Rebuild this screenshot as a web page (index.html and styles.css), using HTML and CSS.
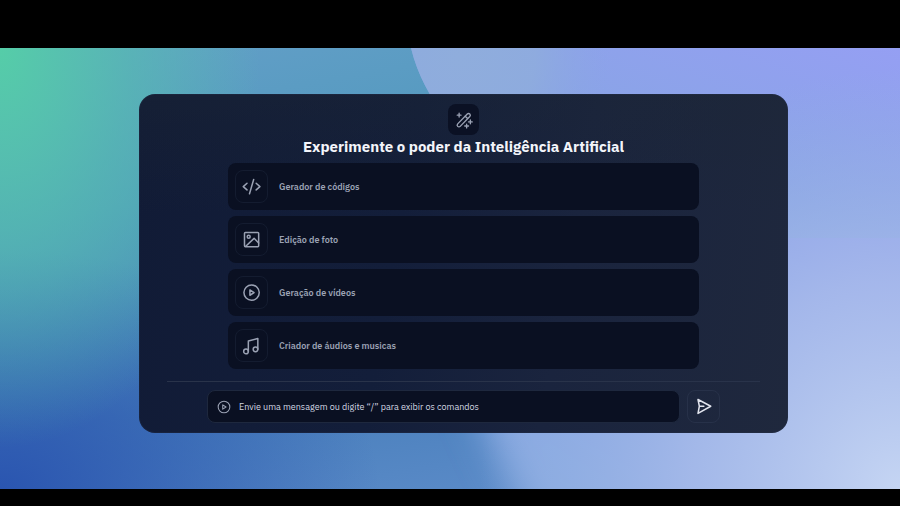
FILE: index.html
```html
<!DOCTYPE html>
<html lang="pt-BR">
<head>
<meta charset="utf-8">
<meta name="viewport" content="width=device-width, initial-scale=1">
<title>Inteligência Artificial</title>
<link rel="stylesheet" href="styles.css">
</head>
<body>
<main class="stage">
  <svg class="backdrop" viewBox="0 0 900 441" preserveAspectRatio="none" aria-hidden="true">
    <defs>
      <linearGradient id="wave" x1="0" y1="1" x2="1" y2="0">
        <stop offset="0" stop-color="#8aaede"/>
        <stop offset="0.5" stop-color="#89a4e6"/>
        <stop offset="1" stop-color="#959ff3"/>
      </linearGradient>
      <radialGradient id="corner" gradientUnits="userSpaceOnUse" cx="900" cy="441" r="420">
        <stop offset="0" stop-color="#c5d5f3"/>
        <stop offset="0.5" stop-color="#a9bcea" stop-opacity="0.8"/>
        <stop offset="1" stop-color="#93b0e0" stop-opacity="0"/>
      </radialGradient>
      <radialGradient id="glow" gradientUnits="userSpaceOnUse" cx="460" cy="10" r="150">
        <stop offset="0" stop-color="#8faddc"/>
        <stop offset="0.5" stop-color="#8faddc" stop-opacity="0.8"/>
        <stop offset="1" stop-color="#8aa5e4" stop-opacity="0"/>
      </radialGradient>
      <filter id="soft" x="-20%" y="-20%" width="140%" height="140%"><feGaussianBlur stdDeviation="18"/></filter>
      <clipPath id="upper"><rect width="900" height="190"/></clipPath>
    </defs>
    <path d="M430 190 C445 290 470 360 535 480 L960 480 V150 H430Z" fill="url(#wave)" filter="url(#soft)"/>
    <g clip-path="url(#upper)">
      <path d="M411 0 C418 28 430 48 445 70 C480 125 520 145 560 190 H900 V0Z" fill="url(#wave)"/>
      <path d="M411 0 C418 28 430 48 445 70 C480 125 520 145 560 190 H900 V0Z" fill="url(#glow)"/>
    </g>
    <rect width="900" height="441" fill="url(#corner)"/>
  </svg>

  <section class="panel" aria-labelledby="title">
    <header class="head">
      <span class="badge">
        <svg class="icon icon-wand" viewBox="0 0 24 24" aria-hidden="true">
          <path d="M3.600 17.200 16.400 4a2.300 2.300 0 0 1 3.300 3.300L6.900 20.500a2.300 2.300 0 0 1-3.300-3.300Z"/>
          <path d="m13.600 6.900 3.200 3.200"/>
          <path d="M5.500 3v5M3 5.500h5M20.500 12v5M18 14.500h5M15.500 17.500v5M13 20h5"/>
        </svg>
      </span>
      <h1 class="title" id="title">Experimente o poder da Inteligência Artificial</h1>
    </header>

    <div class="cards">
      <button class="card" type="button">
        <span class="tile"><svg class="icon" viewBox="0 0 24 24" aria-hidden="true"><path d="M6 7.500 1.500 11.500 6 15.500M17 7.500l4.500 4-4.500 4M14 3 9 20"/></svg></span>
        <span>Gerador de códigos</span>
      </button>
      <button class="card" type="button">
        <span class="tile"><svg class="icon" viewBox="0 0 24 24" aria-hidden="true"><rect x="3" y="3" width="17" height="17" rx="1"/><circle cx="8" cy="8" r="1.800"/><path d="M4.500 19.500 14.500 10l5.500 5.500"/></svg></span>
        <span>Edição de foto</span>
      </button>
      <button class="card" type="button">
        <span class="tile"><svg class="icon" viewBox="0 0 24 24" aria-hidden="true"><circle cx="11.500" cy="11.500" r="9.200"/><path d="M9.500 8.300v6.400l5-3.200Z"/></svg></span>
        <span>Geração de vídeos</span>
      </button>
      <button class="card" type="button">
        <span class="tile"><svg class="icon" viewBox="0 0 24 24" aria-hidden="true"><circle cx="4.800" cy="18.500" r="2.800"/><circle cx="16.200" cy="16" r="2.800"/><path d="M7.600 18.500V6L19 3V16"/></svg></span>
        <span>Criador de áudios e musicas</span>
      </button>
    </div>

    <form class="composer">
      <label class="field">
        <svg class="icon icon-play" viewBox="0 0 24 24" aria-hidden="true"><circle cx="12" cy="12" r="10"/><path d="M9.800 8.300v7.400l5.700-3.700Z"/></svg>
        <input class="input" type="text" aria-label="Mensagem" placeholder="Envie uma mensagem ou digite “/” para exibir os comandos">
      </label>
      <button class="send" type="button" aria-label="Enviar">
        <svg class="icon icon-send" viewBox="0 0 24 24" aria-hidden="true"><path d="M4 2 21 11 4 20.500l1.800-9.500ZM5.800 11h6"/></svg>
      </button>
    </form>
  </section>
</main>
</body>
</html>
```
FILE: styles.css
```css
* {
  box-sizing: border-box;
}

body {
  margin: 0;
  min-height: 100vh;
  padding: 48px 0 17px;
  display: flex;
  background: #000;
  font-family: "IBM Plex Sans", "Noto Sans", sans-serif;
}

.stage {
  position: relative;
  flex: 1;
  padding: 46px 112px 56px 139px;
  overflow: hidden;
  background:
    radial-gradient(ellipse 260px 400px at 0 0, #55cda8 0%, #54bfaea0 50%, #55cda800 100%),
    radial-gradient(ellipse 380px 240px at 0 100%, #2a55b0 0%, #2a55b000 100%),
    linear-gradient(170deg, #649fc8 0%, #5299be 30%, #477eba 65%, #6390ce 100%);
}

.backdrop {
  position: absolute;
  inset: 0;
  width: 100%;
  height: 100%;
}

.panel {
  position: relative;
  padding: 10px 28px;
  border-radius: 16px;
  background:
    linear-gradient(180deg, #1d273460 0%, #1d273400 35%),
    linear-gradient(100deg, #111b36 0%, #131e3a 40%, #1a243e 65%, #1f283d 100%);
  box-shadow: inset 0 0 0 1px #2a395440;
}

.head {
  display: flex;
  flex-direction: column;
  align-items: center;
}

.badge {
  display: grid;
  place-items: center;
  width: 31px;
  height: 31px;
  border-radius: 8px;
  background: #0b1124;
}

.title {
  margin: 0;
  font-size: 15px;
  line-height: 24px;
  font-weight: 700;
  color: #f3f5fa;
}

.icon {
  display: block;
  width: 20px;
  height: 20px;
  fill: none;
  stroke: #9ba2b4;
  stroke-width: 1.8;
  stroke-linecap: round;
  stroke-linejoin: round;
}

.icon-wand {
  width: 18px;
  height: 18px;
}

.cards {
  display: grid;
  gap: 6px;
  margin: 4px 61px 0;
}

.card {
  display: flex;
  align-items: center;
  gap: 11px;
  height: 47px;
  padding: 0 7px;
  border: 0;
  border-radius: 8px;
  background: #0a1022;
  color: #9ba2b4;
  font: inherit;
  font-size: 9px;
  font-weight: 600;
  text-align: left;
}

.tile,
.send {
  display: grid;
  place-items: center;
  flex: none;
  width: 33px;
  height: 33px;
  padding: 0;
  border: 1px solid #141c30;
  border-radius: 8px;
}

.composer {
  display: flex;
  gap: 7px;
  margin: 12px 0 0;
  padding: 8px 40px 0;
  border-top: 1px solid #29334a;
}

.field {
  display: flex;
  align-items: center;
  gap: 8px;
  flex: 1;
  padding: 0 9px;
  border: 1px solid #1e283e;
  border-radius: 8px;
  background: #0a1022;
}

.icon-play {
  width: 14px;
  height: 14px;
}

.input {
  flex: 1;
  min-width: 0;
  padding: 0;
  border: 0;
  outline: 0;
  background: transparent;
  color: #d2d6e1;
  font: inherit;
  font-size: 9px;
}

.input::placeholder {
  color: #d2d6e1;
  opacity: 1;
}

.send {
  border-color: #273149;
  background: transparent;
}

.icon-send {
  width: 18px;
  height: 18px;
  stroke: #e2e5ee;
  stroke-width: 2;
}
```
